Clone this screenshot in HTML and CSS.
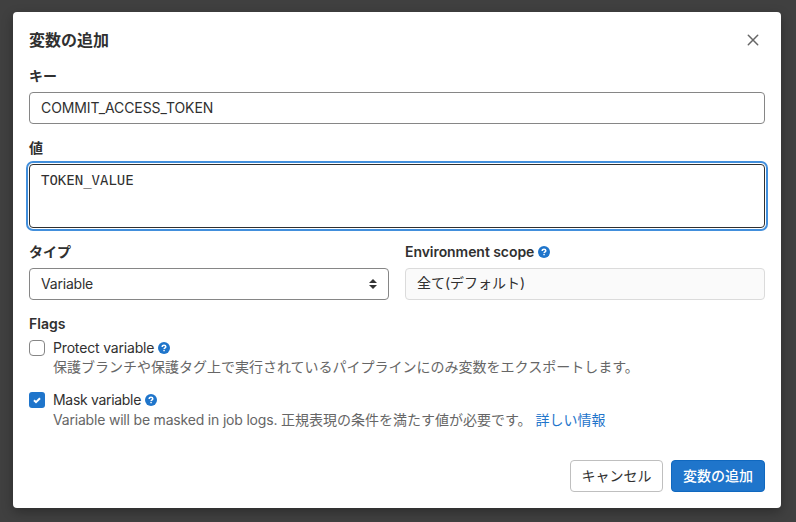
FILE: index.html
```html
<!DOCTYPE html>
<html lang="ja">
<head>
<meta charset="utf-8">
<title>変数の追加</title>
<link rel="stylesheet" href="styles.css">
</head>
<body>
<svg class="sprite" width="0" height="0">
  <symbol id="help" viewBox="0 0 12 12">
    <circle cx="6" cy="6" r="6" fill="#1f75cb"/>
    <path d="M4.2 4.9C4.2 3.8 5 3.2 6 3.2s1.8.6 1.8 1.5C7.8 5.8 6.1 5.8 6.1 7.1" fill="none" stroke="#fff" stroke-width="1.5"/>
    <rect x="5.3" y="7.8" width="1.5" height="1.5" rx=".5" fill="#fff"/>
  </symbol>
</svg>
<main class="modal">
  <header class="modal-header">
    <h1>変数の追加</h1>
    <button class="close" aria-label="閉じる"><svg width="12" height="12" viewBox="0 0 12 12"><path d="M1.3 1.3l9.4 9.4M10.7 1.3l-9.4 9.4" fill="none" stroke="#666" stroke-width="1.5" stroke-linecap="round"/></svg></button>
  </header>
  <label class="label">キー</label>
  <div class="control"><span class="key-text">COMMIT_ACCESS_TOKEN</span></div>
  <label class="label value-label">値</label>
  <div class="control textarea"><span class="mono">TOKEN_VALUE</span></div>
  <div class="columns">
    <div>
      <label class="label">タイプ</label>
      <div class="control select"><span class="select-text">Variable</span><svg width="8" height="10" viewBox="0 0 8 10"><path d="M4 0l4 4H0zM4 10l4-4H0z" fill="#333"/></svg></div>
    </div>
    <div>
      <label class="label"><span class="scope-text">Environment scope</span><svg class="help"><use href="#help"/></svg></label>
      <div class="control disabled">全て(デフォルト)</div>
    </div>
  </div>
  <section class="flags">
    <label class="label">Flags</label>
    <div class="flag">
      <span class="checkbox"></span>
      <div>
        <div class="flag-name"><span class="protect-text">Protect variable</span><svg class="help"><use href="#help"/></svg></div>
        <p class="protect-note">保護ブランチや保護タグ上で実行されているパイプラインにのみ変数をエクスポートします。</p>
      </div>
    </div>
    <div class="flag">
      <span class="checkbox checked"><svg width="16" height="16" viewBox="0 0 16 16"><path d="M5 8.2l2 1.9 4-3.9" fill="none" stroke="#fff" stroke-width="2"/></svg></span>
      <div>
        <div class="flag-name"><span class="mask-text">Mask variable</span><svg class="help"><use href="#help"/></svg></div>
        <p><span class="desc-text">Variable will be masked in job logs.</span><span>正規表現の条件を満たす値が必要です。</span><a>詳しい情報</a></p>
      </div>
    </div>
  </section>
  <footer>
    <button class="btn">キャンセル</button>
    <button class="btn confirm">変数の追加</button>
  </footer>
</main>
</body>
</html>
```

FILE: styles.css
```css
* { box-sizing: border-box; }
body {
  margin: 0;
  height: 522px;
  overflow: hidden;
  padding: 12px 15px 14px 13px;
  background: #404040;
  color: #303030;
  font: 14px/20px Inter, "Noto Sans CJK JP", sans-serif;
}
.sprite { position: absolute; }
.modal {
  height: 496px;
  padding: 16px;
  background: #fff;
  border-radius: 4px;
  box-shadow: 0 4px 12px rgba(0, 0, 0, .3);
  white-space: nowrap;
}
.modal-header {
  display: flex;
  justify-content: space-between;
  align-items: center;
  height: 24px;
  margin-bottom: 14px;
}
h1 { margin: 0; font-size: 16px; line-height: 24px; font-weight: 600; }
.close {
  display: flex;
  align-items: center;
  justify-content: center;
  width: 24px;
  height: 24px;
  padding: 0;
  border: 0;
  background: none;
}
.label {
  display: flex;
  align-items: center;
  height: 20px;
  margin-bottom: 6px;
  font-weight: 600;
}
.control {
  display: flex;
  align-items: center;
  height: 32px;
  padding: 0 11px;
  border: 1px solid #868686;
  border-radius: 4px;
  background: #fff;
}
.value-label { margin: 14px 0 6px; }
.textarea {
  align-items: flex-start;
  height: 64px;
  padding-top: 5px;
  border-color: #303030;
  box-shadow: 0 0 0 1px #fff, 0 0 0 3px #428fdc;
}
.mono { font-family: "DejaVu Sans Mono", "Liberation Mono", monospace; }
.key-text { letter-spacing: -.09px; }
.select-text { letter-spacing: -.2px; }
.scope-text { letter-spacing: -.06px; }
.protect-text { letter-spacing: -.17px; }
.mask-text { letter-spacing: -.31px; }
.desc-text { width: 228px; letter-spacing: -.19px; }
.columns {
  display: grid;
  grid-template-columns: 1fr 1fr;
  gap: 16px;
  margin-top: 14px;
}
.select { justify-content: space-between; }
.disabled { padding-bottom: 2px; background: #fafafa; border-color: #dbdbdb; }
.help { width: 12px; height: 12px; margin-left: 4px; flex: none; }
.flags { margin-top: 14px; }
.flags > .label { margin-bottom: 4px; }
.flag { display: flex; gap: 8px; height: 52px; }
.checkbox {
  width: 16px;
  height: 16px;
  margin-top: 2px;
  border: 1px solid #868686;
  border-radius: 4px;
  background: #fff;
}
.checkbox.checked { border: 0; border-radius: 3px; background: #1f75cb; }
.checkbox svg { display: block; }
.flag-name { display: flex; align-items: center; height: 20px; }
p { display: flex; margin: 0; height: 20px; color: #666; }
.protect-note { line-height: 18px; }
a { margin-left: 4px; color: #1f75cb; }
footer { display: flex; justify-content: flex-end; gap: 8px; margin-top: 18px; }
.btn {
  width: 93px;
  height: 32px;
  padding: 0;
  border: 1px solid #bfbfbf;
  border-radius: 4px;
  background: #fff;
  color: #303030;
  font: inherit;
}
.confirm { width: 94px; border-color: #1068bf; background: #1f75cb; color: #fff; font-weight: 500; }
```
